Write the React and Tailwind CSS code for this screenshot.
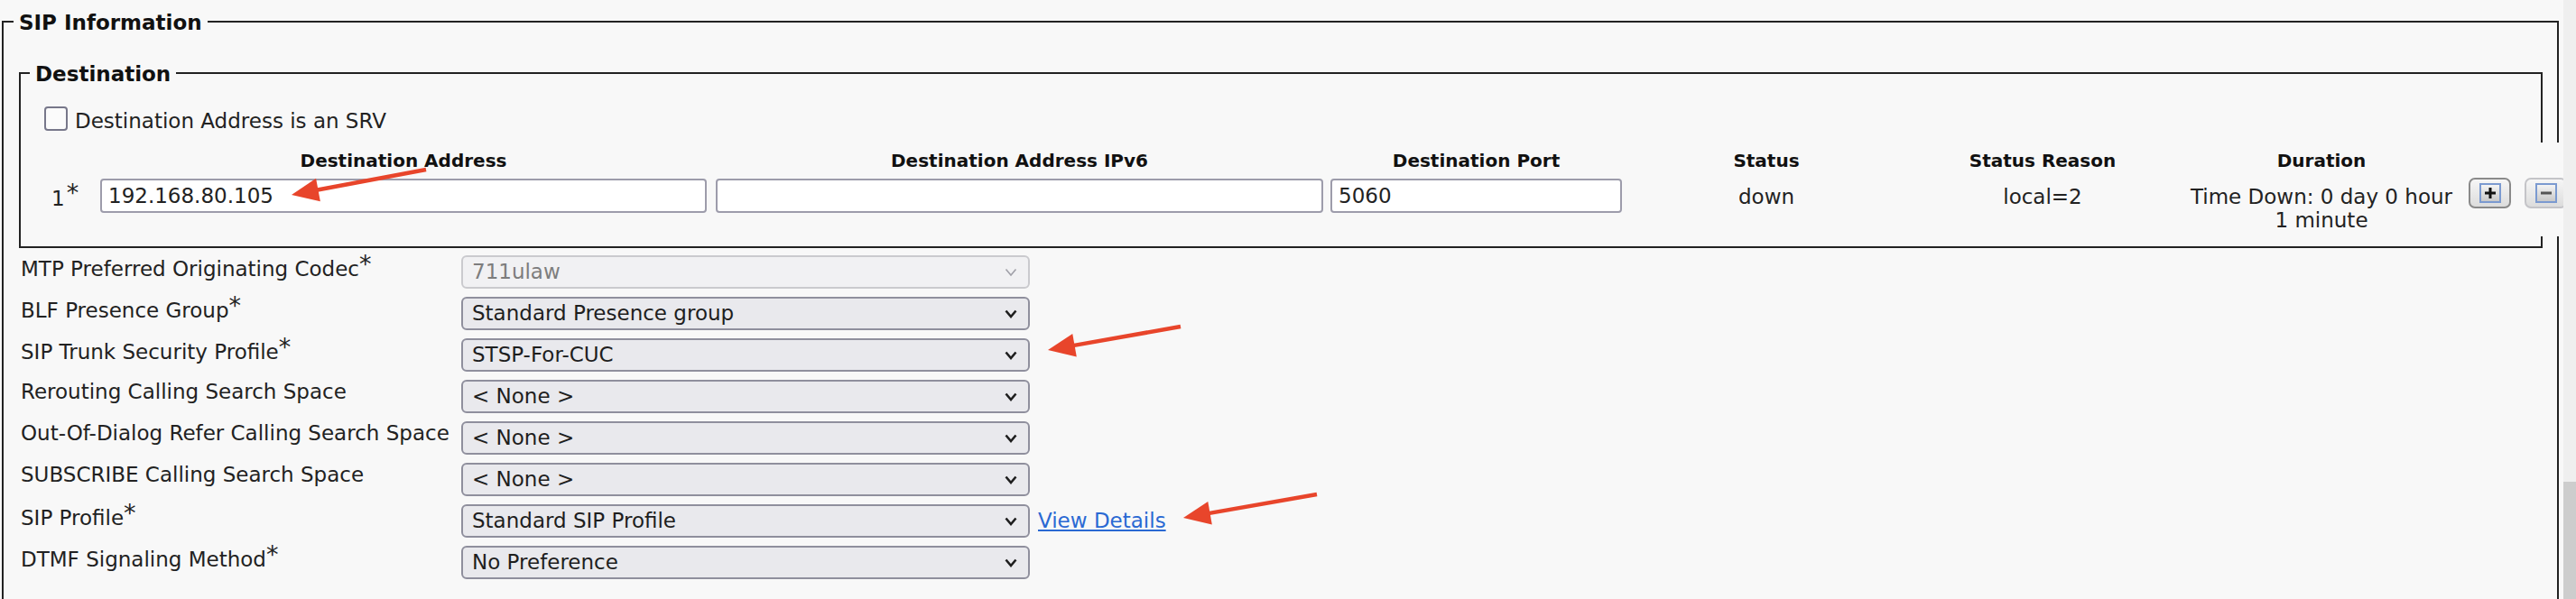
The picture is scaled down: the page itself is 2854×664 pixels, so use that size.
import React from 'react'

const rows = [
  { label: 'MTP Preferred Originating Codec', req: true, value: '711ulaw', disabled: true },
  { label: 'BLF Presence Group', req: true, value: 'Standard Presence group' },
  { label: 'SIP Trunk Security Profile', req: true, value: 'STSP-For-CUC' },
  { label: 'Rerouting Calling Search Space', value: '< None >' },
  { label: 'Out-Of-Dialog Refer Calling Search Space', value: '< None >' },
  { label: 'SUBSCRIBE Calling Search Space', value: '< None >' },
  { label: 'SIP Profile', req: true, value: 'Standard SIP Profile', link: 'View Details' },
  { label: 'DTMF Signaling Method', req: true, value: 'No Preference' },
]

// red annotation arrows, in page pixels
const arrows = [
  { x1: 472, y1: 188, x2: 323, y2: 216 },
  { x1: 1308, y1: 362, x2: 1161, y2: 388 },
  { x1: 1459, y1: 548, x2: 1311, y2: 574 },
]

function Arrow({ x1, y1, x2, y2 }) {
  const dx = x2 - x1
  const dy = y2 - y1
  const len = Math.hypot(dx, dy)
  const ux = dx / len
  const uy = dy / len
  const bx = x2 - ux * 30
  const by = y2 - uy * 30
  const nx = -uy
  const ny = ux
  const pts = `${x2},${y2} ${bx + nx * 13},${by + ny * 13} ${bx - nx * 13},${by - ny * 13}`
  return (
    <g>
      <line x1={x1} y1={y1} x2={bx + ux * 2} y2={by + uy * 2} stroke="#e8452b" strokeWidth="4.5" />
      <polygon points={pts} fill="#e8452b" />
    </g>
  )
}

function Chevron({ disabled }) {
  return (
    <svg width="14" height="10" viewBox="0 0 14 10">
      <path
        d="M1.5 1.5 L7 8 L12.5 1.5"
        fill="none"
        stroke={disabled ? '#a0a0a8' : '#1e1e1e'}
        strokeWidth={disabled ? 1.6 : 2.6}
      />
    </svg>
  )
}

function Req() {
  return <span className="relative -top-[4px] text-[27px] leading-none">*</span>
}

function IconButton({ kind }) {
  const plus = kind === 'plus'
  return (
    <div
      className={`w-[47px] h-[34px] shrink-0 rounded-[7px] border-2 flex items-center justify-center bg-gradient-to-b from-[#f6f6f6] to-[#dcdcdc] ${
        plus ? 'border-[#8a8a8a]' : 'border-[#c4c4c8]'
      }`}
    >
      <div className="w-[24px] h-[22px] border-2 border-[#7b9ad0] bg-gradient-to-b from-[#f4f4f4] to-[#c9c9c9] flex items-center justify-center">
        <svg width="14" height="14" viewBox="0 0 14 14">
          <rect x="1" y="5.5" width="12" height="3" fill={plus ? '#111' : '#555'} />
          {plus && <rect x="5.5" y="1" width="3" height="12" fill="#111" />}
        </svg>
      </div>
    </div>
  )
}

export default function App() {
  return (
    <div className="relative w-[2854px] h-[664px] overflow-hidden flex bg-[#f8f8f8] font-['DejaVu_Sans',sans-serif] text-[23px] text-[#222]">
      {/* page body */}
      <div className="w-[2840px] h-full overflow-hidden pl-[2px]">
        <fieldset className="min-w-0 w-[2833px] mt-[8px] border-2 border-[#222] pl-[17px] pr-[16px] pt-[27px]">
          <legend className="-ml-[6px] px-[6px] pt-[4px] font-bold leading-[27px] text-[#111]">SIP Information</legend>

          {/* Destination */}
          <fieldset className="min-w-0 border-2 border-[#222] pl-[16px] pt-[22px] pb-[11px]">
            <legend className="-ml-[6px] px-[6px] pt-[3px] font-bold leading-[27px] text-[#111]">Destination</legend>

            <div className="flex items-start">
              <div className="ml-[10px] w-[26px] h-[27px] rounded-[4px] border-2 border-[#77778a] bg-[#fbfbfb]" />
              <span className="ml-[8px] mt-[3px] leading-[27px]">Destination Address is an SRV</span>
            </div>

            <div className="mt-[10px] w-max bg-[#f8f8f8] pt-[8px] pb-[5px]">
              <div className="flex text-[20px] leading-[24px] font-bold text-[#111] text-center">
                <div className="w-[72px]" />
                <div className="w-[672px]">Destination Address</div>
                <div className="ml-[10px] w-[673px]">Destination Address IPv6</div>
                <div className="ml-[8px] w-[323px]">Destination Port</div>
                <div className="w-[320px]">Status</div>
                <div className="w-[292px]">Status Reason</div>
                <div className="w-[326px]">Duration</div>
              </div>
              <div className="mt-[8px] flex items-start">
                <div className="w-[72px] pl-[18px] pt-[7px] leading-[26px]">
                  1<span className="relative -top-[5px] ml-[2px] text-[27px] leading-none">*</span>
                </div>
                <input
                  readOnly
                  value="192.168.80.105"
                  className="w-[672px] h-[38px] rounded-[4px] border-2 border-[#9d9cab] bg-white px-[7px] text-[#222] outline-none"
                />
                <input
                  readOnly
                  value=""
                  className="ml-[10px] w-[673px] h-[38px] rounded-[4px] border-2 border-[#9d9cab] bg-white px-[7px] outline-none"
                />
                <input
                  readOnly
                  value="5060"
                  className="ml-[8px] w-[323px] h-[38px] rounded-[4px] border-2 border-[#9d9cab] bg-white px-[7px] text-[#222] outline-none"
                />
                <div className="w-[320px] pt-[7px] leading-[26px] text-center">down</div>
                <div className="w-[292px] pt-[7px] leading-[26px] text-center">local=2</div>
                <div className="w-[326px] pt-[7px] leading-[26px] text-center">
                  Time Down: 0 day 0 hour
                  <br />1 minute
                </div>
                <div className="-mt-[1px] flex gap-[15px]">
                  <IconButton kind="plus" />
                  <IconButton kind="minus" />
                </div>
              </div>
            </div>
          </fieldset>

          {/* settings rows */}
          <div className="mt-[8px] flex flex-col gap-[9px]">
            {rows.map((r) => (
              <div key={r.label} className="flex items-start">
                <div className="w-[490px] pl-[2px] leading-[27px] whitespace-nowrap">
                  {r.label}
                  {r.req && <Req />}
                </div>
                <div
                  className={`w-[630px] h-[37px] rounded-[6px] border-2 flex items-center justify-between pl-[10px] pr-[12px] ${
                    r.disabled
                      ? 'bg-[#f1f1f3] border-[#cacace] text-[#7d7d7d]'
                      : 'bg-[#e9e9ed] border-[#8f8f9d] text-[#1e1e1e]'
                  }`}
                >
                  <span className="whitespace-pre">{r.value}</span>
                  <Chevron disabled={r.disabled} />
                </div>
                {r.link && (
                  <a className="ml-[9px] h-[37px] flex items-center text-[#2a69d3] underline underline-offset-2 cursor-pointer">
                    {r.link}
                  </a>
                )}
              </div>
            ))}
          </div>
          <div className="h-[60px]" />
        </fieldset>
      </div>

      {/* scrollbar */}
      <div className="w-[14px] h-full bg-[#efefef] flex flex-col justify-end">
        <div className="h-[130px] bg-[#cdcdcd]" />
      </div>

      {/* annotations */}
      <svg className="absolute inset-0 pointer-events-none" width="2854" height="664">
        {arrows.map((a, i) => (
          <Arrow key={i} {...a} />
        ))}
      </svg>
    </div>
  )
}
